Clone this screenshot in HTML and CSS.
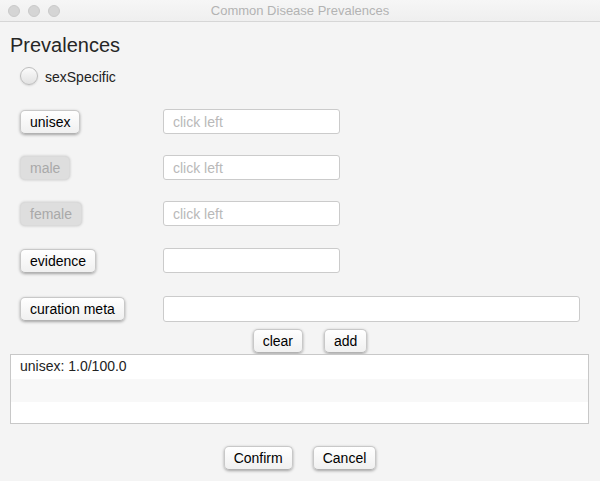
FILE: index.html
```html
<!DOCTYPE html>
<html lang="en">
<head>
<meta charset="utf-8">
<title>Common Disease Prevalences</title>
<link rel="stylesheet" href="styles.css">
</head>
<body>
<div class="window">
  <header class="titlebar">
    <div class="lights">
      <span class="light"></span>
      <span class="light"></span>
      <span class="light"></span>
    </div>
    <div class="title">Common Disease Prevalences</div>
    <div></div>
  </header>
  <main class="content">
    <h1 class="heading">Prevalences</h1>
    <label class="radio-row">
      <span class="radio"></span>
      <span class="radio-label">sexSpecific</span>
    </label>
    <div class="form">
      <button class="btn">unisex</button>
      <input class="field" type="text" placeholder="click left">
      <button class="btn disabled">male</button>
      <input class="field" type="text" placeholder="click left">
      <button class="btn disabled">female</button>
      <input class="field" type="text" placeholder="click left">
      <button class="btn">evidence</button>
      <input class="field" type="text">
      <button class="btn">curation meta</button>
      <input class="field wide" type="text">
    </div>
    <div class="actions">
      <button class="btn">clear</button>
      <button class="btn">add</button>
    </div>
    <ul class="list">
      <li class="item">unisex: 1.0/100.0</li>
      <li class="item alt"></li>
      <li class="item"></li>
    </ul>
    <div class="footer">
      <button class="btn">Confirm</button>
      <button class="btn">Cancel</button>
    </div>
  </main>
</div>
</body>
</html>
```

FILE: styles.css
```css
* {
  box-sizing: border-box;
}

html, body {
  margin: 0;
  padding: 0;
}

body {
  width: 600px;
  height: 481px;
  background: #f4f4f4;
  font-family: "Liberation Sans", Arial, Helvetica, sans-serif;
  color: #222;
  overflow: hidden;
}

.window {
  display: flex;
  flex-direction: column;
  height: 481px;
}

.titlebar {
  height: 22px;
  display: grid;
  grid-template-columns: 1fr auto 1fr;
  align-items: center;
  background: linear-gradient(#f6f6f6, #efefef);
  border-bottom: 1px solid #d6d6d6;
}

.lights {
  display: flex;
  gap: 8px;
  padding-left: 8px;
  padding-top: 1px;
}

.light {
  width: 12px;
  height: 12px;
  border-radius: 50%;
  background: #d5d5d5;
  border: 1px solid #cacaca;
}

.title {
  font-size: 13px;
  color: #b3b3b3;
  line-height: 16px;
  padding-top: 1px;
}

.content {
  display: flex;
  flex-direction: column;
  padding: 11px 0 0 10px;
}

.heading {
  margin: 0;
  font-size: 20px;
  font-weight: normal;
  line-height: 24px;
  color: #262626;
}

.radio-row {
  display: flex;
  align-items: center;
  gap: 7px;
  margin: 10px 0 0 10px;
  height: 18px;
}

.radio {
  width: 18px;
  height: 18px;
  border-radius: 50%;
  border: 1px solid #bdbdbd;
  background: linear-gradient(#fbfbfb, #e2e2e2);
  box-shadow: 0 1px 2px rgba(0, 0, 0, 0.12);
}

.radio-label {
  font-size: 14px;
  line-height: 18px;
  padding-top: 2px;
  color: #222;
}

.form {
  display: grid;
  grid-template-columns: 143px 1fr;
  grid-template-rows: 46px 46px 47px 48px 26px;
  align-items: start;
  justify-items: start;
  margin: 24px 0 0 10px;
  padding-right: 20px;
}

.btn {
  height: 24px;
  padding: 0 9px;
  border: 1px solid #c8c8c8;
  border-bottom-color: #b2b2b2;
  border-radius: 5px;
  background: linear-gradient(#ffffff, #f0f0f0);
  box-shadow: 0 1px 3px rgba(0, 0, 0, 0.34);
  font-family: "Liberation Sans", Arial, Helvetica, sans-serif;
  font-size: 14px;
  line-height: 22px;
  color: #000;
}

.form .btn {
  margin-top: 1px;
}

.btn.disabled {
  background: #dedede;
  border-color: #dadada;
  color: #a9a9a9;
  box-shadow: 0 0 3px rgba(0, 0, 0, 0.2);
}

.field {
  width: 177px;
  height: 25px;
  border: 1px solid #cbcbcb;
  border-radius: 3px;
  background: #fff;
  padding: 0 9px;
  font-family: "Liberation Sans", Arial, Helvetica, sans-serif;
  font-size: 14px;
  color: #222;
}

.field::placeholder {
  color: #b9b9b9;
}

.field.wide {
  width: 417px;
  height: 26px;
}

.actions {
  display: flex;
  justify-content: center;
  gap: 21px;
  margin: 7px 0 0 10px;
}

.list {
  list-style: none;
  margin: 1px 11px 0 0;
  padding: 0;
  height: 70px;
  border: 1px solid #c8c8c8;
  background: #fff;
  overflow: hidden;
}

.item {
  height: 23.5px;
  padding-left: 9px;
  font-size: 14px;
  line-height: 23px;
  color: #222;
}

.item.alt {
  background: #f8f8f8;
}

.footer {
  display: flex;
  justify-content: center;
  gap: 20px;
  margin: 22px 10px 0 0;
}
```
